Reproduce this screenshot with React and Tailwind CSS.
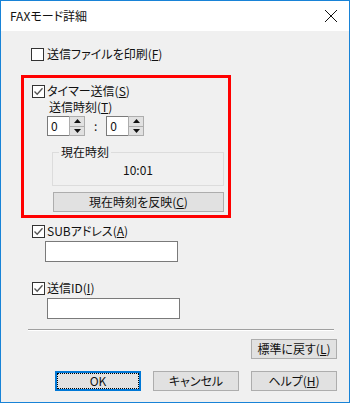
import React from 'react'

const font = { fontFamily: '"Noto Sans CJK JP", "Liberation Sans", sans-serif', fontFeatureSettings: '"palt"' }

function CheckBox({ checked }) {
  return (
    <span className="w-[13px] h-[13px] border border-[#333333] bg-white flex items-center justify-center shrink-0">
      {checked && (
        <svg width="11" height="11" viewBox="0 0 11 11">
          <path d="M1.5 5.5 L4.2 8.3 L9.5 2.2" fill="none" stroke="#555555" strokeWidth="1.3" />
        </svg>
      )}
    </span>
  )
}

function Mn({ children }) {
  return <span className="underline underline-offset-1">{children}</span>
}

function Spinner() {
  return (
    <div className="flex h-[20px]">
      <div className="w-[22px] h-[20px] bg-white border border-[#7a7a7a] border-r-0 flex items-center pl-[3px]">0</div>
      <div className="w-[16px] h-[20px] border border-[#adadad] flex flex-col bg-[#f0f0f0]">
        <div className="flex-1 bg-[#e1e1e1] border-b border-[#adadad] flex items-center justify-center">
          <svg width="7" height="4" viewBox="0 0 7 4"><path d="M0 4 L3.5 0 L7 4 Z" fill="#111" /></svg>
        </div>
        <div className="flex-1 bg-[#e1e1e1] flex items-center justify-center">
          <svg width="7" height="4" viewBox="0 0 7 4"><path d="M0 0 L3.5 4 L7 0 Z" fill="#111" /></svg>
        </div>
      </div>
    </div>
  )
}

function Btn({ children, focus, className }) {
  return (
    <div
      className={
        'h-[20px] flex items-center justify-center bg-[#e1e1e1] ' +
        (focus ? 'border-2 border-[#0078d7] ' : 'border border-[#adadad] ') +
        (className || '')
      }
    >
      {focus ? (
        <div className="w-full h-full border border-dotted border-black flex items-center justify-center">{children}</div>
      ) : (
        children
      )}
    </div>
  )
}

export default function App() {
  return (
    <div
      className="w-[350px] h-[403px] border border-[#1883d7] flex flex-col text-[12px] leading-[14px] text-[#111]"
      style={font}
    >
      {/* Title bar */}
      <div className="h-[30px] bg-white flex items-center justify-between pl-[9px] pr-[11px]">
        <span>FAXモード詳細</span>
        <svg width="14" height="14" viewBox="0 0 14 14">
          <path d="M1 1 L13 13 M13 1 L1 13" stroke="#111" strokeWidth="1" />
        </svg>
      </div>

      {/* Body */}
      <div className="flex-1 bg-[#f0f0f0] flex flex-col">
        <div className="flex items-center gap-[3px] ml-[30px] mt-[16px] h-[14px]">
          <CheckBox />
          <span>送信ファイルを印刷(<Mn>F</Mn>)</span>
        </div>

        {/* Timer group (highlighted) */}
        <div className="ml-[20px] mt-[14px] w-[210px] h-[143px] border-[3px] border-[#ff0000] flex flex-col">
          <div className="flex items-center gap-[2px] ml-[8px] mt-[6px] h-[14px]">
            <CheckBox checked />
            <span>タイマー送信(<Mn>S</Mn>)</span>
          </div>
          <div className="ml-[25px] mt-[2px] h-[14px]">
            送信時刻(<Mn>T</Mn>)
          </div>
          <div className="flex items-center ml-[23px] mt-[2px]">
            <Spinner />
            <span className="ml-[9px] mr-[9px]">:</span>
            <Spinner />
          </div>
          <div className="relative ml-[28px] mt-[16px] w-[172px] h-[34px] border border-[#dcdcdc] flex items-center justify-center">
            <span className="absolute -top-[8px] left-[6px] bg-[#f0f0f0] px-[2px]">現在時刻</span>
            <span className="mt-[2px]">10:01</span>
          </div>
          <Btn className="ml-[29px] mt-[6px] w-[171px] h-[19px]">
            現在時刻を反映(<Mn>C</Mn>)
          </Btn>
        </div>

        <div className="flex items-center gap-[2px] ml-[31px] mt-[6px] h-[14px]">
          <CheckBox checked />
          <span>SUBアドレス(<Mn>A</Mn>)</span>
        </div>
        <div className="ml-[44px] mt-[3px] w-[133px] h-[21px] bg-white border border-[#7a7a7a]" />

        <div className="flex items-center gap-[2px] ml-[31px] mt-[19px] h-[14px]">
          <CheckBox checked />
          <span>送信ID(<Mn>I</Mn>)</span>
        </div>
        <div className="ml-[46px] mt-[3px] w-[133px] h-[21px] bg-white border border-[#7a7a7a]" />

        <div className="ml-[27px] mt-[10px] w-[306px] border-t border-[#a0a0a0] border-b border-b-white" />

        <div className="flex justify-end mr-[12px] mt-[8px]">
          <Btn className="w-[86px] h-[19px]">
            標準に戻す(<Mn>L</Mn>)
          </Btn>
        </div>

        <div className="flex ml-[54px] mt-[12px] gap-[12px]">
          <Btn focus className="w-[86px] h-[20px]">OK</Btn>
          <Btn className="w-[86px] h-[20px]">キャンセル</Btn>
          <Btn className="w-[86px] h-[20px]">
            ヘルプ(<Mn>H</Mn>)
          </Btn>
        </div>
      </div>
    </div>
  )
}
